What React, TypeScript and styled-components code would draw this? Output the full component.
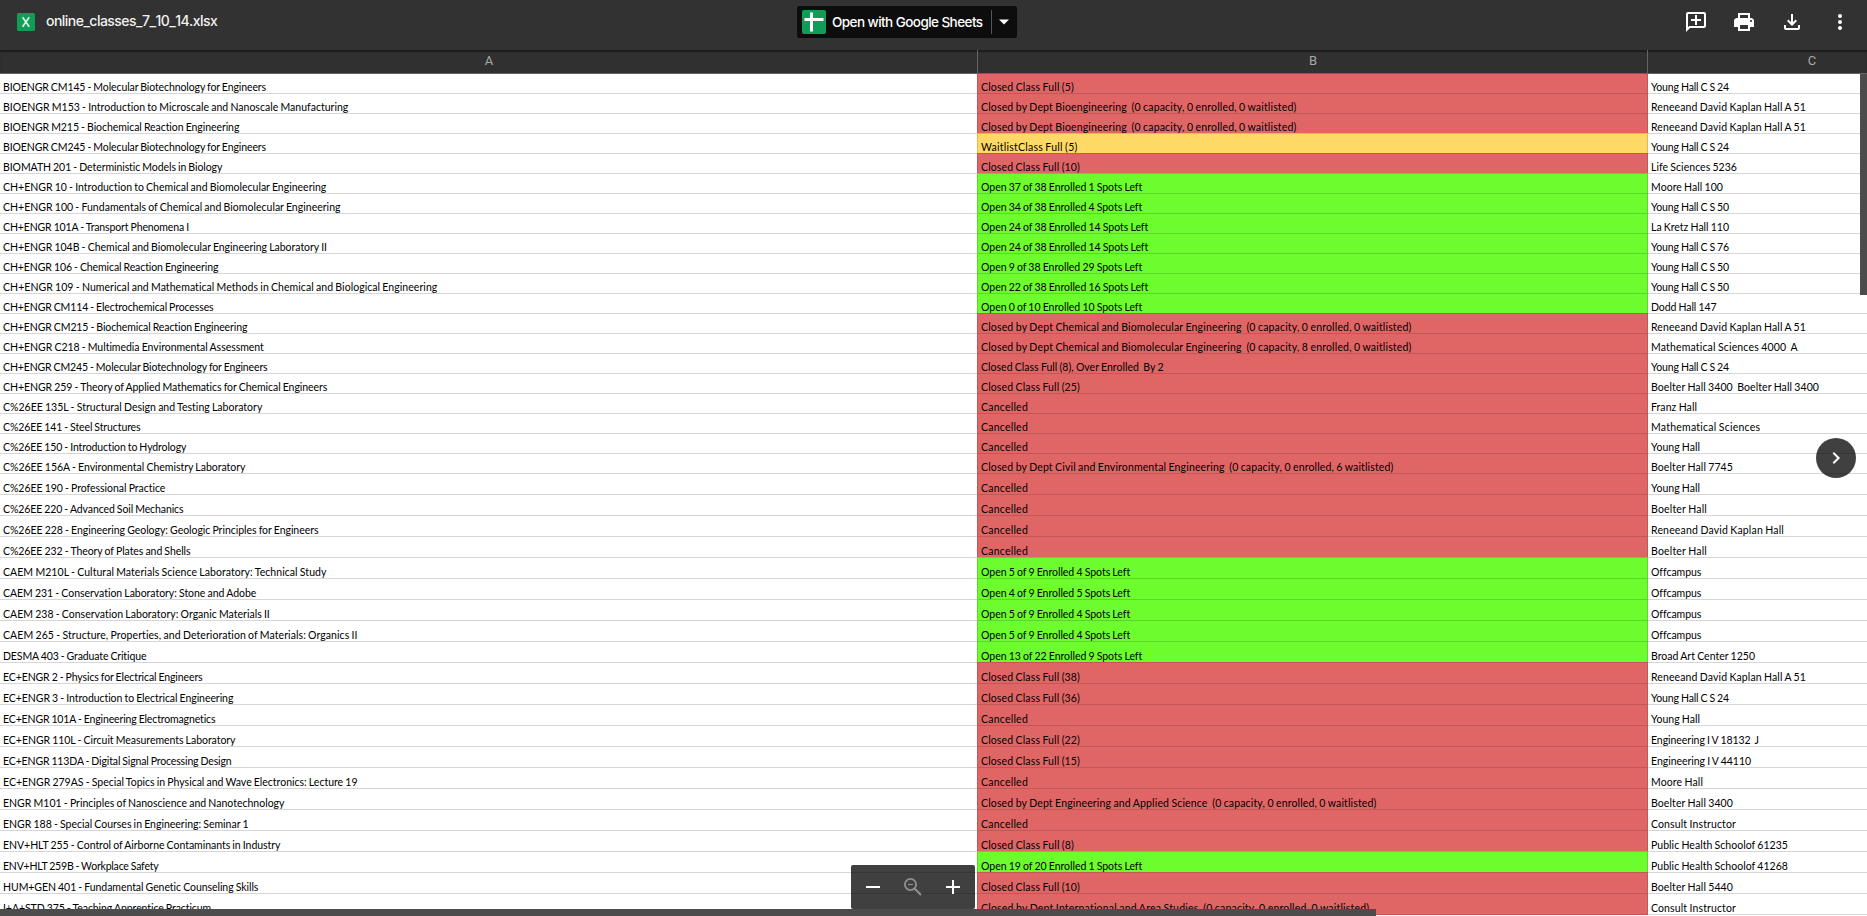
import React, { useLayoutEffect, useRef, useState } from 'react';
import styled, { createGlobalStyle } from 'styled-components';

const Global = createGlobalStyle`
  * { box-sizing: border-box; }
  html, body, #root { height: 100%; margin: 0; overflow: hidden; }
  body { background: #fff; }
`;

type Status = 'closed' | 'open' | 'wait';
const fills: Record<Status, string> = { closed: '#e06666', open: '#6dfd2f', wait: '#ffd966' };
const lines: Record<Status, string> = { closed: '#c25757', open: '#5cd628', wait: '#ddbc58' };

const Page = styled.div`
  position: relative;
  display: flex;
  flex-direction: column;
  width: 1867px;
  height: 916px;
  overflow: hidden;
`;
const Toolbar = styled.header`
  flex: none;
  display: grid;
  grid-template-columns: 797px auto 1fr;
  align-items: start;
  height: 50px;
  background: #323232;
`;
const FileInfo = styled.div`
  display: flex;
  align-items: center;
  gap: 11px;
  height: 44px;
  padding-left: 17px;
`;
const FileName = styled.span`
  position: relative;
  top: -1px;
  font: 500 14px/20px Inter, sans-serif;
  font-kerning: none;
  letter-spacing: -0.53px;
  color: #f1f1f1;
  white-space: nowrap;
`;
const OpenButton = styled.div`
  display: flex;
  align-items: center;
  width: 220px;
  height: 32px;
  margin-top: 6px;
  padding-left: 5px;
  border-radius: 2px;
  background: #0d0d0d;
`;
const SheetsLogo = styled.svg`
  flex: none;
`;
const OpenLabel = styled.span`
  flex: none;
  width: 165px;
  padding-left: 6px;
  font: 500 13.5px/20px Inter, sans-serif;
  letter-spacing: -0.56px;
  color: #fff;
  white-space: nowrap;
`;
const Caret = styled.span`
  display: flex;
  align-items: center;
  height: 24px;
  padding-left: 7px;
  border-left: 1px solid #555;
`;
const Actions = styled.div`
  display: flex;
  justify-content: flex-end;
  gap: 24px;
  padding: 10px 15px 0 0;
  svg { display: block; fill: #fff; }
`;
const HeaderRow = styled.div`
  flex: none;
  display: flex;
  height: 24px;
  background: #303030;
  border-bottom: 1px solid #646464;
  box-shadow: inset 0 2px 1px #1c1c1c;
`;
const HeaderCell = styled.div<{ $w: number }>`
  flex: none;
  width: ${p => p.$w}px;
  padding-left: 1px;
  border-right: 1px solid #646464;
  font: 13px/22px Roboto, sans-serif;
  color: #a8a8a8;
  text-align: center;
`;
const Sheet = styled.div`
  display: flex;
  flex-direction: column;
`;
const Row = styled.div<{ $h: number }>`
  flex: none;
  display: flex;
  height: ${p => p.$h}px;
`;
const Cell = styled.div<{ $w: number; $status?: Status; $next?: Status }>`
  flex: none;
  display: flex;
  align-items: flex-end;
  width: ${p => p.$w}px;
  padding: 0 0 0 3px;
  border-bottom: 1px solid ${p => (p.$next ? lines[p.$next] : '#d6d6d6')};
  background: ${p => (p.$status ? fills[p.$status] : '#fff')};
  ${p => p.$status && `box-shadow: inset 1px 0 ${lines[p.$status]}, inset -1px 0 ${lines[p.$status]}; padding-left: 4px;`}
`;
const CellText = styled.span`
  font: 10.5px/12px Lato, sans-serif;
  word-spacing: -0.5px;
  color: #000;
  white-space: pre;
`;
const VScroll = styled.div`
  position: absolute;
  right: 0;
  top: 74px;
  width: 7px;
  height: 221px;
  background: #4c4c4c;
`;
const HScroll = styled.div`
  position: absolute;
  left: 0;
  bottom: 0;
  width: 1376px;
  height: 7px;
  background: #4c4c4c;
`;
const NextButton = styled.div`
  position: absolute;
  left: 1816px;
  top: 438px;
  display: flex;
  align-items: center;
  justify-content: center;
  width: 40px;
  height: 40px;
  border-radius: 50%;
  background: rgba(0, 0, 0, 0.75);
`;
const ZoomPanel = styled.div`
  position: absolute;
  left: 851px;
  top: 865px;
  display: flex;
  align-items: center;
  justify-content: space-between;
  width: 124px;
  height: 44px;
  padding: 0 10px;
  border-radius: 2px;
  background: rgba(0, 0, 0, 0.75);
`;

function Fitted({ text, width }: { text: string; width: number }) {
  const ref = useRef<HTMLSpanElement>(null);
  const [spacing, setSpacing] = useState(0);
  useLayoutEffect(() => {
    const measure = () => {
      const el = ref.current;
      if (!el) return;
      el.style.letterSpacing = '0px';
      const s = (width - el.getBoundingClientRect().width) / text.length;
      el.style.letterSpacing = `${s}px`;
      setSpacing(s);
    };
    measure();
    document.fonts.ready.then(measure);
  }, [text, width]);
  return <CellText ref={ref} style={{ letterSpacing: `${spacing}px` }}>{text}</CellText>;
}

type Entry = [string, number, string, number, string, number];
const full = (n: string): [string, number] => [`Closed Class Full (${n})`, n.length > 1 ? 1080 : 1074];
const open = (a: number, b: number, c: number): [string, number] => {
  const t = `Open ${a} of ${b} Enrolled ${c} Spots Left`;
  return [t, 1112 + 6 * `${a}${b}${c}`.length];
};
const dept = (d: string, right: number, n = '0', w = '0'): [string, number] => [
  `Closed by Dept ${d}  (0 capacity, ${n} enrolled, ${w} waitlisted)`, right];
const gone: [string, number] = ['Cancelled', 1028];
const young: [string, number] = ['Young Hall', 1700];
const cs = (n: string): [string, number] => [`Young Hall C S ${n}`, 1729];
const renee: [string, number] = ['Reneeand David Kaplan Hall A 51', 1806];
const boelter: [string, number] = ['Boelter Hall', 1707];
const off: [string, number] = ['Offcampus', 1701];
const consult: [string, number] = ['Consult Instructor', 1736];

const entries: Entry[] = [
  ['BIOENGR CM145 - Molecular Biotechnology for Engineers', 266, ...full('5'), ...cs('24')],
  ['BIOENGR M153 - Introduction to Microscale and Nanoscale Manufacturing', 348.5, ...dept('Bioengineering', 1296.5), ...renee],
  ['BIOENGR M215 - Biochemical Reaction Engineering', 239.5, ...dept('Bioengineering', 1296.5), ...renee],
  ['BIOENGR CM245 - Molecular Biotechnology for Engineers', 266, 'WaitlistClass Full (5)', 1077.5, ...cs('24')],
  ['BIOMATH 201 - Deterministic Models in Biology', 222.5, ...full('10'), 'Life Sciences 5236', 1737],
  ['CH+ENGR 10 - Introduction to Chemical and Biomolecular Engineering', 326.5, ...open(37, 38, 1), 'Moore Hall 100', 1723],
  ['CH+ENGR 100 - Fundamentals of Chemical and Biomolecular Engineering', 340.5, ...open(34, 38, 4), ...cs('50')],
  ['CH+ENGR 101A - Transport Phenomena I', 189, ...open(24, 38, 14), 'La Kretz Hall 110', 1729],
  ['CH+ENGR 104B - Chemical and Biomolecular Engineering Laboratory II', 327, ...open(24, 38, 14), ...cs('76')],
  ['CH+ENGR 106 - Chemical Reaction Engineering', 218.5, ...open(9, 38, 29), ...cs('50')],
  ['CH+ENGR 109 - Numerical and Mathematical Methods in Chemical and Biological Engineering', 437.5, ...open(22, 38, 16), ...cs('50')],
  ['CH+ENGR CM114 - Electrochemical Processes', 213.5, ...open(0, 10, 10), 'Dodd Hall 147', 1716.5],
  ['CH+ENGR CM215 - Biochemical Reaction Engineering', 247.5, ...dept('Chemical and Biomolecular Engineering', 1411.5), ...renee],
  ['CH+ENGR C218 - Multimedia Environmental Assessment', 264, ...dept('Chemical and Biomolecular Engineering', 1411.5, '8'), 'Mathematical Sciences 4000  A', 1798],
  ['CH+ENGR CM245 - Molecular Biotechnology for Engineers', 267.5, 'Closed Class Full (8), Over Enrolled  By 2', 1163.5, ...cs('24')],
  ['CH+ENGR 259 - Theory of Applied Mathematics for Chemical Engineers', 327.5, ...full('25'), 'Boelter Hall 3400  Boelter Hall 3400', 1819],
  ['C%26EE 135L - Structural Design and Testing Laboratory', 262.5, ...gone, 'Franz Hall', 1697],
  ['C%26EE 141 - Steel Structures', 140.5, ...gone, 'Mathematical Sciences', 1760.5],
  ['C%26EE 150 - Introduction to Hydrology', 186.5, ...gone, ...young],
  ['C%26EE 156A - Environmental Chemistry Laboratory', 245.5, ...dept('Civil and Environmental Engineering', 1393.5, '0', '6'), 'Boelter Hall 7745', 1733],
  ['C%26EE 190 - Professional Practice', 165.5, ...gone, ...young],
  ['C%26EE 220 - Advanced Soil Mechanics', 183.5, ...gone, ...boelter],
  ['C%26EE 228 - Engineering Geology: Geologic Principles for Engineers', 318.5, ...gone, 'Reneeand David Kaplan Hall', 1784],
  ['C%26EE 232 - Theory of Plates and Shells', 190.5, ...gone, ...boelter],
  ['CAEM M210L - Cultural Materials Science Laboratory: Technical Study', 326.5, ...open(5, 9, 4), ...off],
  ['CAEM 231 - Conservation Laboratory: Stone and Adobe', 256.5, ...open(4, 9, 5), ...off],
  ['CAEM 238 - Conservation Laboratory: Organic Materials II', 270, ...open(5, 9, 4), ...off],
  ['CAEM 265 - Structure, Properties, and Deterioration of Materials: Organics II', 358, ...open(5, 9, 4), ...off],
  ['DESMA 403 - Graduate Critique', 146.5, ...open(13, 22, 9), 'Broad Art Center 1250', 1755],
  ['EC+ENGR 2 - Physics for Electrical Engineers', 202.5, ...full('38'), ...renee],
  ['EC+ENGR 3 - Introduction to Electrical Engineering', 233.5, ...full('36'), ...cs('24')],
  ['EC+ENGR 101A - Engineering Electromagnetics', 215.5, ...gone, ...young],
  ['EC+ENGR 110L - Circuit Measurements Laboratory', 235.5, ...full('22'), 'Engineering I V 18132  J', 1759],
  ['EC+ENGR 113DA - Digital Signal Processing Design', 231.5, ...full('15'), 'Engineering I V 44110', 1751],
  ['EC+ENGR 279AS - Special Topics in Physical and Wave Electronics: Lecture 19', 357.5, ...gone, 'Moore Hall', 1703],
  ['ENGR M101 - Principles of Nanoscience and Nanotechnology', 284.5, ...dept('Engineering and Applied Science', 1376.5), 'Boelter Hall 3400', 1733],
  ['ENGR 188 - Special Courses in Engineering: Seminar 1', 248.5, ...gone, ...consult],
  ['ENV+HLT 255 - Control of Airborne Contaminants in Industry', 280.5, ...full('8'), 'Public Health Schoolof 61235', 1788],
  ['ENV+HLT 259B - Workplace Safety', 158.5, ...open(19, 20, 1), 'Public Health Schoolof 41268', 1788],
  ['HUM+GEN 401 - Fundamental Genetic Counseling Skills', 258.5, ...full('10'), 'Boelter Hall 5440', 1733],
  ['I+A+STD 375 - Teaching Apprentice Practicum', 211.5, ...dept('International and Area Studies', 1369.5), ...consult],
];
const statusOf = (e?: Entry): Status =>
  e && e[2].startsWith('Open') ? 'open' : e && e[2].startsWith('Wait') ? 'wait' : 'closed';

export default function App() {
  return (
    <Page>
      <Global />
      <Toolbar>
        <FileInfo>
          <svg width="18" height="18" viewBox="0 0 18 18">
            <rect width="18" height="18" rx="1.5" fill="#0f9d58" />
            <path d="M5.6 4.2 12.2 13.8M12.2 4.2 5.6 13.8" stroke="#dff3e8" strokeWidth="1.7" />
          </svg>
          <FileName>online_classes_7_10_14.xlsx</FileName>
        </FileInfo>
        <OpenButton>
          <SheetsLogo width="24" height="24" viewBox="0 0 24 24">
            <rect width="24" height="24" rx="2" fill="#0f9d58" />
            <path d="M2.5 9.500H21.500M9.500 2.500V21.500" stroke="#fff" strokeWidth="3" />
          </SheetsLogo>
          <OpenLabel>Open with Google Sheets</OpenLabel>
          <Caret>
            <svg width="10" height="6" viewBox="0 0 10 6"><path d="M0 .5H10L5 5.5z" fill="#fff" /></svg>
          </Caret>
        </OpenButton>
        <Actions>
          <svg width="24" height="24" viewBox="0 0 24 24"><path d="M22 4c0-1.100-.9-2-2-2H4c-1.100 0-2 .9-2 2v18l4-4h14c1.100 0 2-.9 2-2V4zm-2 12H5.200L4 17.200V4h16v12zM11 5h2v4h4v2h-4v4h-2v-4H7V9h4z" /></svg>
          <svg width="24" height="24" viewBox="0 0 24 24"><path d="M19 8h-1V3H6v5H5c-1.660 0-3 1.340-3 3v6h4v4h12v-4h4v-6c0-1.660-1.340-3-3-3zM8 5h8v3H8V5zm8 14H8v-4h8v4zm3-7c-.55 0-1-.45-1-1s.45-1 1-1 1 .45 1 1-.45 1-1 1z" /></svg>
          <svg width="24" height="24" viewBox="0 0 24 24"><path d="M4 15v3c0 1.100.9 2 2 2h12c1.100 0 2-.9 2-2v-3h-2v3H6v-3zM17 11l-1.410-1.410L13 12.170V4h-2v8.170L8.410 9.590 7 11l5 5z" /></svg>
          <svg width="24" height="24" viewBox="0 0 24 24"><circle cx="12" cy="6" r="2" /><circle cx="12" cy="12" r="2" /><circle cx="12" cy="18" r="2" /></svg>
        </Actions>
      </Toolbar>
      <HeaderRow>
        <HeaderCell $w={978}>A</HeaderCell>
        <HeaderCell $w={670}>B</HeaderCell>
        <HeaderCell $w={328}>C</HeaderCell>
      </HeaderRow>
      <Sheet>
        {entries.map((e, i) => (
          <Row key={i} $h={i < 20 ? 20 : 21}>
            <Cell $w={977}><Fitted text={e[0]} width={e[1] - 3} /></Cell>
            <Cell $w={671} $status={statusOf(e)} $next={statusOf(entries[i + 1])}>
              <Fitted text={e[2]} width={e[3] - 981} />
            </Cell>
            <Cell $w={328}><Fitted text={e[4]} width={e[5] - 1651} /></Cell>
          </Row>
        ))}
      </Sheet>
      <VScroll />
      <ZoomPanel>
        <svg width="24" height="24" viewBox="0 0 24 24"><path d="M5 12H19" stroke="#fff" strokeWidth="2" /></svg>
        <svg width="24" height="24" viewBox="0 0 24 24" fill="none" stroke="#909090">
          <circle cx="9.500" cy="9.500" r="5.600" strokeWidth="1.800" />
          <path d="M13.500 13.500 20 20" strokeWidth="2" /><path d="M7 9.500H12" strokeWidth="1.200" />
        </svg>
        <svg width="24" height="24" viewBox="0 0 24 24"><path d="M5 12H19M12 5V19" stroke="#fff" strokeWidth="2" /></svg>
      </ZoomPanel>
      <HScroll />
      <NextButton>
        <svg width="24" height="24" viewBox="0 0 24 24"><path d="M9.300 6.700 14.600 12 9.300 17.300" fill="none" stroke="#fff" strokeWidth="2" /></svg>
      </NextButton>
    </Page>
  );
}
